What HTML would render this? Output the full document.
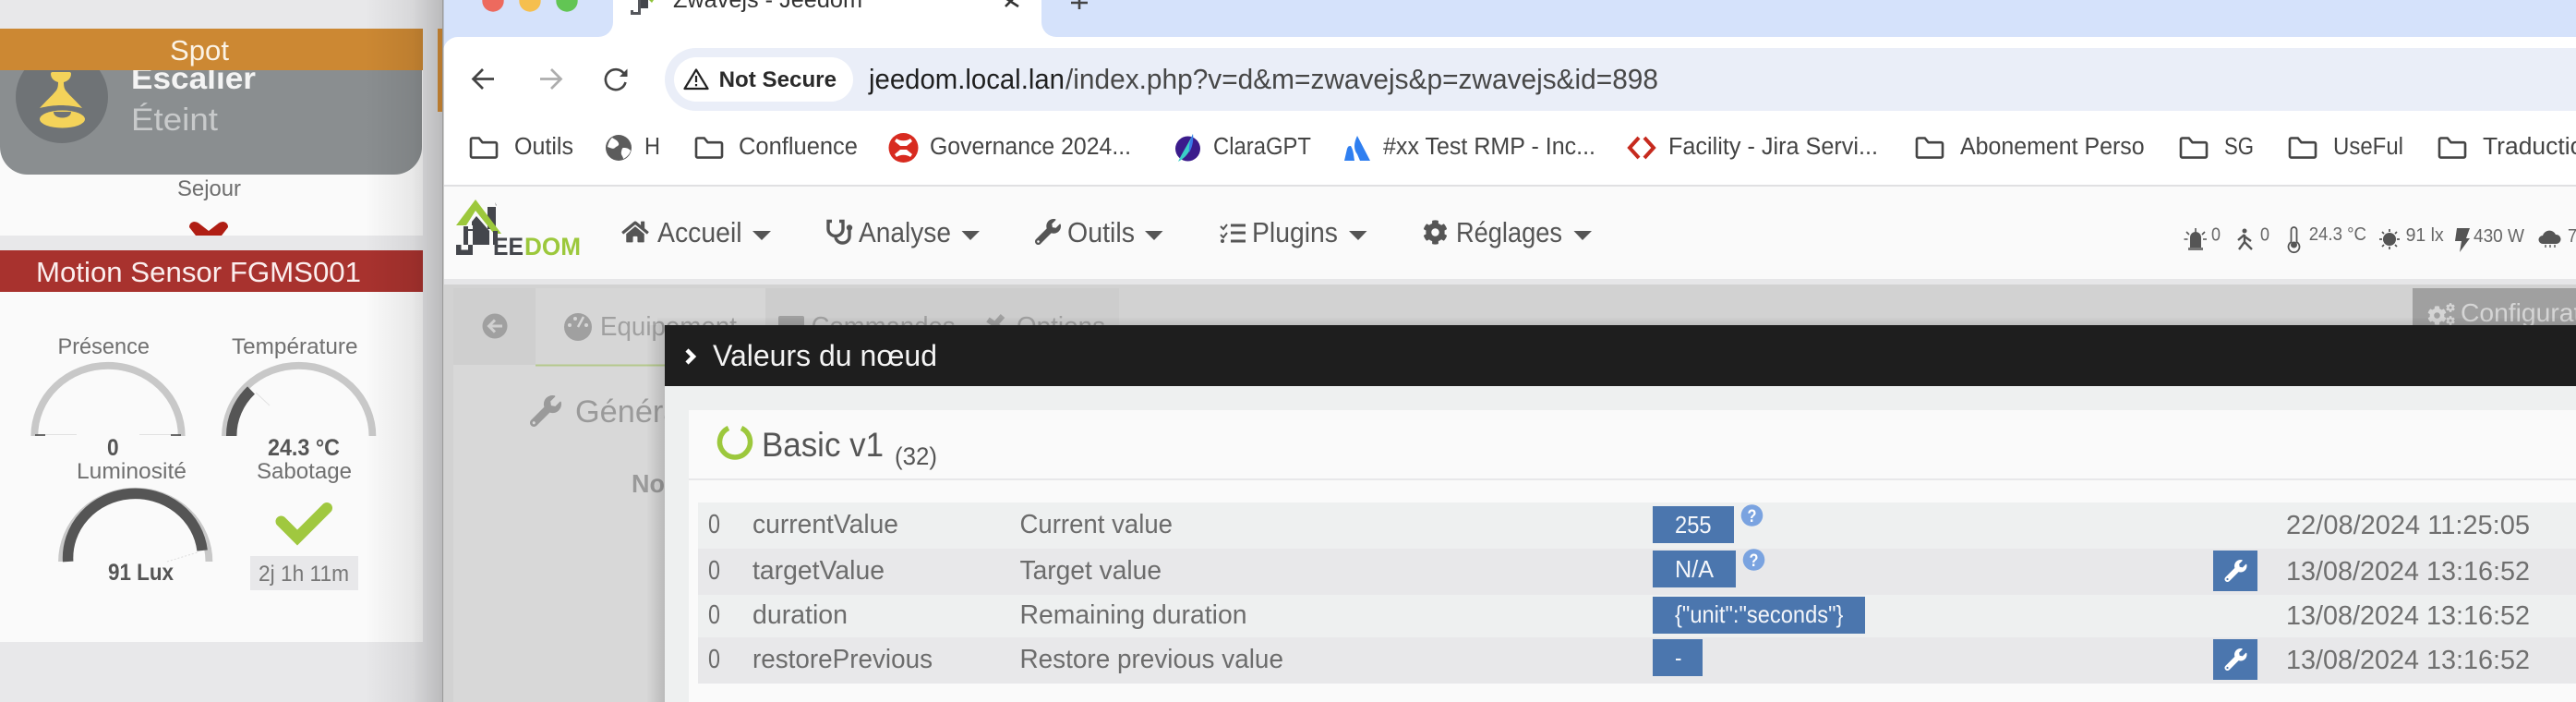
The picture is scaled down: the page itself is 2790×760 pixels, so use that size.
<!DOCTYPE html>
<html lang="fr">
<head>
<meta charset="utf-8">
<title>Zwavejs - Jeedom</title>
<style>
html,body{margin:0;padding:0;width:2790px;height:760px;overflow:hidden;background:#e8e8ea}
svg{display:block}
text{font-family:"Liberation Sans",sans-serif}
.bm{font-size:25.500px;fill:#444}
.nav{font-size:30.500px;fill:#555}
.td{font-size:28.500px;fill:#6c6c6c}
.val{font-size:26px;fill:#f4f6fa}
.lab{font-size:24.500px;fill:#707070}
.big{font-size:25px;font-weight:bold;fill:#555}
.inf{font-size:20px;fill:#666}
</style>
</head>
<body>
<svg xmlns="http://www.w3.org/2000/svg" width="2790" height="760" viewBox="0 0 2790 760">
<defs>
<linearGradient id="sh" x1="0" x2="1" y1="0" y2="0">
<stop offset="0" stop-color="#000" stop-opacity="0"/>
<stop offset=".6" stop-color="#000" stop-opacity=".07"/>
<stop offset="1" stop-color="#000" stop-opacity=".2"/>
</linearGradient>
<linearGradient id="topsh" x1="0" x2="0" y1="0" y2="1">
<stop offset="0" stop-color="#000" stop-opacity="0"/>
<stop offset="1" stop-color="#000" stop-opacity=".09"/>
</linearGradient>
<linearGradient id="modalsh" x1="0" x2="1" y1="0" y2="0">
<stop offset="0" stop-color="#000" stop-opacity="0"/>
<stop offset="1" stop-color="#000" stop-opacity=".14"/>
</linearGradient>
<symbol id="wrench" viewBox="0 0 512 512"><path d="M507.73 109.1c-2.24-9.03-13.54-12.09-20.12-5.51l-74.36 74.36-67.88-11.31-11.31-67.88 74.36-74.36c6.62-6.62 3.43-17.9-5.66-20.16-47.38-11.74-99.55.91-136.58 37.93-39.64 39.64-50.55 97.1-34.05 147.2L18.74 402.76c-24.99 24.99-24.99 65.51 0 90.5 24.99 24.99 65.51 24.99 90.5 0l213.21-213.21c50.12 16.71 107.47 5.68 147.37-34.22 37.07-37.07 49.7-89.32 37.91-136.73zM64 472c-13.25 0-24-10.75-24-24 0-13.26 10.75-24 24-24s24 10.74 24 24c0 13.25-10.75 24-24 24z"/></symbol>
<symbol id="home" viewBox="0 0 576 512"><path d="M280.37 148.26L96 300.11V464a16 16 0 0 0 16 16l112.06-.29a16 16 0 0 0 15.92-16V368a16 16 0 0 1 16-16h64a16 16 0 0 1 16 16v95.64a16 16 0 0 0 16 16.05L464 480a16 16 0 0 0 16-16V300L295.67 148.26a12.19 12.19 0 0 0-15.3 0zM571.6 251.47L488 182.56V44.05a12 12 0 0 0-12-12h-56a12 12 0 0 0-12 12v72.61L318.47 43a48 48 0 0 0-61 0L4.34 251.47a12 12 0 0 0-1.6 16.9l25.5 31A12 12 0 0 0 45.15 301l235.22-193.74a12.19 12.19 0 0 1 15.3 0L530.9 301a12 12 0 0 0 16.9-1.6l25.5-31a12 12 0 0 0-1.7-16.93z"/></symbol>
<symbol id="cog" viewBox="0 0 512 512"><path d="M487.4 315.7l-42.6-24.6c4.3-23.2 4.3-47 0-70.2l42.6-24.6c4.9-2.8 7.1-8.6 5.5-14-11.1-35.6-30-67.8-54.7-94.6-3.8-4.1-10-5.1-14.8-2.3L380.8 110c-17.9-15.4-38.5-27.3-60.8-35.1V25.8c0-5.6-3.9-10.5-9.4-11.7-36.7-8.2-74.3-7.8-109.2 0-5.5 1.2-9.4 6.1-9.4 11.7V75c-22.2 7.9-42.8 19.8-60.8 35.1L88.7 85.5c-4.9-2.8-11-1.9-14.8 2.3-24.7 26.7-43.6 58.9-54.7 94.6-1.7 5.4.6 11.2 5.5 14L67.3 221c-4.3 23.2-4.3 47 0 70.2l-42.6 24.6c-4.9 2.8-7.1 8.6-5.5 14 11.1 35.6 30 67.8 54.7 94.6 3.8 4.1 10 5.1 14.8 2.3l42.6-24.6c17.9 15.4 38.5 27.3 60.8 35.1v49.2c0 5.6 3.9 10.5 9.4 11.7 36.7 8.2 74.3 7.8 109.2 0 5.5-1.2 9.4-6.1 9.4-11.7v-49.2c22.2-7.9 42.8-19.8 60.8-35.1l42.6 24.6c4.9 2.8 11 1.9 14.8-2.3 24.7-26.7 43.6-58.9 54.7-94.6 1.5-5.5-.7-11.3-5.6-14.1zM256 336c-44.1 0-80-35.9-80-80s35.9-80 80-80 80 35.9 80 80-35.9 80-80 80z"/></symbol>
<symbol id="folder" viewBox="0 0 32 24"><path d="M2 5.500V21a1.600 1.600 0 0 0 1.600 1.600h24.800A1.600 1.600 0 0 0 30 21V7.800a1.600 1.600 0 0 0-1.600-1.600H14.500L10.800 1.500H3.600A1.600 1.600 0 0 0 2 3.100z" fill="none" stroke="#444" stroke-width="2.600" stroke-linejoin="round"/></symbol>
<clipPath id="pageclip"><rect x="481" y="308" width="2309" height="44"/></clipPath>
</defs>

<!-- LEFT PAGE -->
<rect width="480" height="760" fill="#e8e8ea"/>
<rect x="0" y="76" width="458" height="179" fill="#fafafa"/>
<path d="M0 76H457V159a30 30 0 0 1-30 30H30a30 30 0 0 1-30-30z" fill="#8a8e90"/>
<circle cx="67" cy="105" r="50" fill="#6f7376"/>
<g fill="#f4d35a">
<path d="M55 80a2 2 0 0 1 2-2h18a2 2 0 0 1 2 2c0 5-4 8-8 9 0 5 1 8 3 10 4 5 11 11 17 18-8-2-16-3-23-3s-15 1-23 3c6-7 13-13 17-18 2-2 3-5 3-10-4-1-8-4-8-9z"/>
<ellipse cx="67.500" cy="129" rx="24.500" ry="9.500"/>
</g>
<path d="M58 121h19c0 4-4 6.500-9.500 6.500S58 125 58 121z" fill="#6f7376"/>
<text x="142" y="96" font-size="33" font-weight="bold" fill="#f4f4f4" textLength="135" lengthAdjust="spacingAndGlyphs">Escalier</text>
<text x="142" y="141" font-size="34" fill="#c8cacb" textLength="94" lengthAdjust="spacingAndGlyphs">Éteint</text>
<rect x="0" y="31" width="458" height="45" fill="#cc8833"/>
<text x="184" y="65" font-size="31" fill="#fbf3e6" textLength="64" lengthAdjust="spacingAndGlyphs">Spot</text>
<text x="192" y="212" font-size="24.500" fill="#6e6e6e" textLength="69" lengthAdjust="spacingAndGlyphs">Sejour</text>
<path d="M205 246Q205 241 210 240Q214 240 217 243L226 250L235 243Q238 240 242 240Q247 241 247 246L240 255H212z" fill="#b01e14"/>
<rect x="0" y="255" width="458" height="16" fill="#e8e8ea"/>
<rect x="0" y="271" width="458" height="45" fill="#a8322e"/>
<text x="39" y="305" font-size="31" fill="#fbeeee" textLength="352" lengthAdjust="spacingAndGlyphs">Motion Sensor FGMS001</text>
<rect x="0" y="316" width="458" height="379" fill="#fafafa"/>

<text x="62.500" y="383" class="lab" textLength="99.500" lengthAdjust="spacingAndGlyphs">Présence</text>
<text x="251" y="383" class="lab" textLength="136.500" lengthAdjust="spacingAndGlyphs">Température</text>
<!-- gauge 1 -->
<path d="M37.300 472A79.700 76.200 0 0 1 196.700 472" fill="none" stroke="#c8c8c8" stroke-width="7.800"/>
<path d="M38 471h11M185 471h11" stroke="#555" stroke-width="1.800"/>
<path d="M49 470.500h34M151 470.500h34" stroke="#e2e2e2" stroke-width="1"/>
<text x="116" y="493" class="big" textLength="12.600" lengthAdjust="spacingAndGlyphs">0</text>
<!-- gauge 2 -->
<path d="M244 472A79.700 76.200 0 0 1 403.400 472" fill="none" stroke="#c8c8c8" stroke-width="7.800"/>
<path d="M250.700 472A73 69.500 0 0 1 272 422.500" fill="none" stroke="#555" stroke-width="11.500"/>
<path d="M277 425L292 439" stroke="#e2e2e2" stroke-width="1"/>
<text x="290" y="493" class="big" textLength="78" lengthAdjust="spacingAndGlyphs">24.3 °C</text>
<text x="83" y="518" class="lab" textLength="119" lengthAdjust="spacingAndGlyphs">Luminosité</text>
<text x="278" y="518" class="lab" textLength="103" lengthAdjust="spacingAndGlyphs">Sabotage</text>
<!-- gauge 3 -->
<path d="M67 608A79.700 76.200 0 0 1 226.400 608" fill="none" stroke="#c8c8c8" stroke-width="7.800"/>
<path d="M73.700 608A73 69.500 0 0 1 219.100 596" fill="none" stroke="#555" stroke-width="11.500"/>
<path d="M181 608L214 598" stroke="#ddd" stroke-width="1" stroke-dasharray="2 2"/>
<text x="117" y="628" class="big" textLength="71" lengthAdjust="spacingAndGlyphs">91 Lux</text>
<path d="M304.500 564.500L322 582L354 550" fill="none" stroke="#a0c83f" stroke-width="12" stroke-linecap="round" stroke-linejoin="miter"/>
<rect x="271" y="602" width="117" height="37" fill="#e8e8ea"/>
<text x="280" y="629" class="lab" style="fill:#777" textLength="98" lengthAdjust="spacingAndGlyphs">2j 1h 11m</text>

<rect x="395" y="0" width="85" height="760" fill="url(#sh)"/>
<rect x="474" y="31" width="6" height="90" fill="#b87a2f"/>

<!-- BROWSER WINDOW -->
<rect x="480" y="0" width="2310" height="760" fill="#fff"/>
<rect x="480" y="0" width="2310" height="40" fill="#d5e2fb"/>
<path d="M480 56a16 16 0 0 1 16-16H480z" fill="#d5e2fb"/>
<path d="M664 0V24a16 16 0 0 1-16 16h496a16 16 0 0 1-16-16V0z" fill="#fff"/>
<rect x="479" y="0" width="1.500" height="760" fill="#9b9b9b"/>
<circle cx="534" cy="1" r="11.700" fill="#ed6a5e"/>
<circle cx="574" cy="1" r="11.700" fill="#f5bf4f"/>
<circle cx="614" cy="1" r="11.700" fill="#62c554"/>
<!-- favicon -->
<path d="M693 0h9v9h-9z" fill="#44464c"/>
<path d="M683 11h3v2h5V0h3v16h-11z" fill="#55575c"/>
<path d="M703 0h5l-2 3z" fill="#8fc33a"/>
<text x="729" y="8" font-size="25" fill="#333" textLength="205" lengthAdjust="spacingAndGlyphs">Zwavejs - Jeedom</text>
<path d="M1089-2L1103 7M1103-7L1089 7" stroke="#333" stroke-width="2.600" fill="none"/>
<path d="M1169-6V10M1160 3H1178" stroke="#444" stroke-width="2.600" fill="none"/>

<!-- toolbar -->
<path d="M535 85.500H514M523 75L512.500 85.500L523 96" fill="none" stroke="#444" stroke-width="2.700"/>
<path d="M585 85.500H606M597 75L607.500 85.500L597 96" fill="none" stroke="#adadad" stroke-width="2.700"/>
<path d="M677.500 89a11 11 0 1 1-1.500-9" fill="none" stroke="#444" stroke-width="2.600"/>
<path d="M679.500 74.500V83H671z" fill="#444"/>
<path d="M754 52H2790V120H754a34 34 0 0 1 0-68z" fill="#eaeef8"/>
<rect x="730" y="62" width="194" height="48" rx="24" fill="#fff"/>
<path d="M754 75.500L766.500 96H741.500z" fill="none" stroke="#222" stroke-width="2.200" stroke-linejoin="round"/>
<rect x="752.900" y="82" width="2.200" height="7" fill="#222"/>
<rect x="752.900" y="91" width="2.200" height="2.300" fill="#222"/>
<text x="778.600" y="94" font-size="24.500" font-weight="bold" fill="#2a2a2a" textLength="127.400" lengthAdjust="spacingAndGlyphs">Not Secure</text>
<text x="941" y="96" font-size="31" fill="#1f1f1f" textLength="212" lengthAdjust="spacingAndGlyphs">jeedom.local.lan</text>
<text x="1154" y="96" font-size="31" fill="#474747" textLength="642" lengthAdjust="spacingAndGlyphs">/index.php?v=d&amp;m=zwavejs&amp;p=zwavejs&amp;id=898</text>

<!-- bookmarks -->
<use href="#folder" x="508" y="148" width="32" height="24"/>
<text x="557" y="167" class="bm" textLength="64" lengthAdjust="spacingAndGlyphs">Outils</text>
<circle cx="670" cy="160" r="14" fill="#5c5c5c"/>
<path d="M663 149c3 2 6 3 7 6s-2 3-4 5-5 0-8-1c1-4 2-7 5-10zM676 160c3 0 5 1 7 3-1 4-4 7-8 9 0-3-3-4-2-8s1-4 3-4z" fill="#fff"/>
<text x="698" y="167" class="bm" textLength="17" lengthAdjust="spacingAndGlyphs">H</text>
<use href="#folder" x="752" y="148" width="32" height="24"/>
<text x="800" y="167" class="bm" textLength="129" lengthAdjust="spacingAndGlyphs">Confluence</text>
<circle cx="978.500" cy="160" r="16" fill="#d82b20"/>
<path d="M971 150c4 3 11 3 15 0l2 3-6 5h-7l-6-5zM971 170c4-3 11-3 15 0l2-3-6-5h-7l-6 5z" fill="#fff"/>
<text x="1007" y="167" class="bm" textLength="218" lengthAdjust="spacingAndGlyphs">Governance 2024...</text>
<circle cx="1286.500" cy="161" r="13.500" fill="#3b1c8c"/>
<path d="M1292 145c1 12-4 24-16 30 5-11 11-19 16-30z" fill="#3ad0c8"/>
<path d="M1292 145c1 8-1 15-4 20-1-6 1-14 4-20z" fill="#3a78e8"/>
<text x="1314" y="167" class="bm" textLength="106" lengthAdjust="spacingAndGlyphs">ClaraGPT</text>
<path d="M1470 147c-4 8-4 15 0 20l3 7h11zM1463 158c-3 0-3 1-4 3l-3 13h11c-1-6-1-11-4-16z" fill="#2f7ff0"/>
<text x="1498" y="167" class="bm" textLength="230" lengthAdjust="spacingAndGlyphs">#xx Test RMP - Inc...</text>
<path d="M1775 149L1765 160L1775 171M1781 149L1791 160L1781 171" fill="none" stroke="#c62a1e" stroke-width="4"/>
<text x="1807" y="167" class="bm" textLength="227" lengthAdjust="spacingAndGlyphs">Facility - Jira Servi...</text>
<use href="#folder" x="2074" y="148" width="32" height="24"/>
<text x="2123" y="167" class="bm" textLength="199.600" lengthAdjust="spacingAndGlyphs">Abonement Perso</text>
<use href="#folder" x="2360" y="148" width="32" height="24"/>
<text x="2409" y="167" class="bm" textLength="32" lengthAdjust="spacingAndGlyphs">SG</text>
<use href="#folder" x="2478" y="148" width="32" height="24"/>
<text x="2527" y="167" class="bm" textLength="76" lengthAdjust="spacingAndGlyphs">UseFul</text>
<use href="#folder" x="2640" y="148" width="32" height="24"/>
<text x="2689" y="167" class="bm" textLength="124" lengthAdjust="spacingAndGlyphs">Traduction</text>

<rect x="481" y="200" width="2309" height="2" fill="#e0e0e2"/>

<!-- jeedom navbar -->
<rect x="481" y="202" width="2309" height="100" fill="#fafafa"/>
<rect x="481" y="302" width="2309" height="6" fill="#e6e6e8"/>
<!-- logo -->
<rect x="528" y="224" width="9" height="24" fill="#44464c"/>
<path d="M536 219l2 3-1 1z" fill="#999"/>
<path d="M511 240L516 234L530 250V265H511z" fill="#44464c"/>
<path d="M502 245H514V265H502z" fill="#44464c"/>
<path d="M515 216L494 244H505L515 228L535 253H543z" fill="#9cc83c"/>
<rect x="507" y="250" width="5" height="22" fill="#fafafa"/>
<rect x="507" y="244" width="5" height="4" fill="#fafafa"/>
<path d="M494 265h5.500v5.500h7.500V265H512v11h-18z" fill="#44464c"/>
<rect x="534" y="250" width="5" height="15" fill="#44464c"/>
<text x="534" y="276" font-size="27" font-weight="bold" fill="#44464c" textLength="33" lengthAdjust="spacingAndGlyphs">EE</text>
<text x="568" y="276" font-size="27" font-weight="bold" fill="#9cc83c" textLength="61" lengthAdjust="spacingAndGlyphs">DOM</text>

<use href="#home" x="673" y="238" width="30" height="26" fill="#555"/>
<text x="712" y="262" class="nav" textLength="91.600" lengthAdjust="spacingAndGlyphs">Accueil</text>
<path d="M815 250H835L825 260z" fill="#555"/>
<path d="M901 239.500H897V248a8 7.500 0 0 0 16 0V239.500H909M905 255.500V256a7.500 7 0 0 0 15 0V249" fill="none" stroke="#555" stroke-width="3.400"/>
<circle cx="920" cy="246.500" r="3.200" fill="#555"/>
<text x="930" y="262" class="nav" textLength="100" lengthAdjust="spacingAndGlyphs">Analyse</text>
<path d="M1041.500 250H1061L1051 260z" fill="#555"/>
<use href="#wrench" x="1121" y="237" width="28" height="28" fill="#555"/>
<text x="1156" y="262" class="nav" textLength="73" lengthAdjust="spacingAndGlyphs">Outils</text>
<path d="M1240 250H1259.500L1250 260z" fill="#555"/>
<path d="M1322 245l3 3 4-5M1322 254l3 3 4-5" fill="none" stroke="#555" stroke-width="2"/>
<circle cx="1324" cy="261" r="2" fill="#555"/>
<path d="M1333 244H1349M1333 252H1349M1333 261H1349" stroke="#555" stroke-width="3"/>
<text x="1356" y="262" class="nav" textLength="93" lengthAdjust="spacingAndGlyphs">Plugins</text>
<path d="M1461 250H1480.500L1471 260z" fill="#555"/>
<use href="#cog" x="1541" y="238" width="27" height="27" fill="#555"/>
<text x="1577" y="262" class="nav" textLength="115" lengthAdjust="spacingAndGlyphs">Réglages</text>
<path d="M1704.500 250H1724L1714 260z" fill="#555"/>

<!-- info icons -->
<path d="M2372 268V257a6 6 0 0 1 12 0v11z" fill="#555"/>
<rect x="2370" y="268" width="16" height="3" fill="#777"/>
<path d="M2378 247v5M2368 251l3 3M2388 251l-3 3M2365.500 259h4M2386 259h4" stroke="#555" stroke-width="1.600"/>
<text x="2395" y="260.500" class="inf" textLength="10" lengthAdjust="spacingAndGlyphs">0</text>
<circle cx="2431" cy="250" r="2.500" fill="#555"/>
<path d="M2431 254L2424 260M2431 254L2431 262L2425 270M2431 262L2439 270M2431 256L2438 261" fill="none" stroke="#555" stroke-width="2.400"/>
<text x="2448" y="260.500" class="inf" textLength="10" lengthAdjust="spacingAndGlyphs">0</text>
<path d="M2481.500 249a3 3 0 0 1 6 0v13a6 6 0 1 1-6 0z" fill="none" stroke="#555" stroke-width="1.800"/>
<circle cx="2484.500" cy="265" r="3.500" fill="#555"/>
<text x="2500.700" y="260" class="inf" textLength="62.300" lengthAdjust="spacingAndGlyphs">24.3 °C</text>
<circle cx="2588" cy="259" r="7" fill="#555"/>
<path d="M2588 248v3M2588 267v3M2577 259h3M2596 259h3M2580 251l2 2M2594 265l2 2M2596 251l-2 2M2582 265l-2 2" stroke="#555" stroke-width="1.700"/>
<text x="2605.600" y="261" class="inf" textLength="41.100" lengthAdjust="spacingAndGlyphs">91 lx</text>
<path d="M2661 247H2675L2671 258H2675L2664 273L2666 261H2659z" fill="#555"/>
<text x="2679" y="262" class="inf" textLength="55" lengthAdjust="spacingAndGlyphs">430 W</text>
<path d="M2754 264a4.500 4.500 0 0 1 0-9 7.500 7.500 0 0 1 14-1 5 5 0 0 1 1 10z" fill="#555"/>
<path d="M2757 265v3M2762 265v3M2767 265v3" stroke="#555" stroke-width="1.400"/>
<text x="2781" y="262" class="inf" textLength="10" lengthAdjust="spacingAndGlyphs">7</text>

<!-- dimmed jeedom page -->
<rect x="481" y="308" width="2309" height="452" fill="#d2d2d2"/>
<rect x="491" y="395" width="240" height="365" fill="#d8d8d8"/>
<rect x="491" y="312" width="89" height="83" fill="#cfcfcf"/>
<circle cx="536" cy="353" r="13.500" fill="#a0a0a0"/>
<path d="M544 353H530M536 346.500L529.500 353L536 359.500" fill="none" stroke="#d0d0d0" stroke-width="3"/>
<rect x="580" y="312" width="249" height="83" fill="#d6d6d6"/>
<rect x="829" y="312" width="383" height="40" fill="#cdcdcd"/>
<rect x="580" y="394.500" width="140" height="2" fill="#b5c98c"/>
<circle cx="626" cy="354" r="15" fill="#a0a0a0"/>
<path d="M626 354L632 343" stroke="#d6d6d6" stroke-width="2.500"/>
<circle cx="617" cy="352" r="2" fill="#d6d6d6"/><circle cx="623" cy="345" r="2" fill="#d6d6d6"/><circle cx="635" cy="352" r="2" fill="#d6d6d6"/>
<text x="650" y="363" font-size="29" fill="#a0a0a0" textLength="148" lengthAdjust="spacingAndGlyphs">Equipement</text>
<g clip-path="url(#pageclip)">
<rect x="843" y="342" width="28" height="20" rx="2" fill="#a0a0a0"/>
<text x="878.600" y="363" font-size="29" fill="#a0a0a0" textLength="156" lengthAdjust="spacingAndGlyphs">Commandes</text>
<path d="M1070 346L1090 360M1086 342L1070 360" stroke="#a0a0a0" stroke-width="6"/>
<text x="1101" y="363" font-size="29" fill="#a0a0a0" textLength="96" lengthAdjust="spacingAndGlyphs">Options</text>
<rect x="2613" y="312" width="177" height="40" fill="#a0a0a0"/>
<use href="#cog" x="2629" y="331" width="21" height="21" fill="#d5d5d5"/>
<use href="#cog" x="2649" y="328" width="10" height="10" fill="#d5d5d5"/>
<use href="#cog" x="2649" y="342" width="10" height="10" fill="#d5d5d5"/>
<text x="2665" y="348" font-size="28" fill="#d5d5d5" textLength="168" lengthAdjust="spacingAndGlyphs">Configuration</text>
</g>
<rect x="712" y="343" width="2078" height="9" fill="url(#topsh)"/>
<use href="#wrench" x="574" y="428" width="34" height="34" fill="#9a9a9a"/>
<text x="623" y="457" font-size="34" fill="#9a9a9a" textLength="122" lengthAdjust="spacingAndGlyphs">Général</text>
<text x="684" y="533" font-size="28" fill="#9a9a9a" font-weight="bold" textLength="60" lengthAdjust="spacingAndGlyphs">Nom</text>
<rect x="700" y="352" width="20" height="408" fill="url(#modalsh)"/>

<!-- modal -->
<rect x="720" y="352" width="2070" height="408" fill="#eef0f0"/>
<rect x="720" y="352" width="2070" height="66" fill="#1e1e1e"/>
<path d="M744 379L751 386L744 393" fill="none" stroke="#fff" stroke-width="4.500"/>
<text x="772" y="396" font-size="32" fill="#f4f4f4" textLength="243" lengthAdjust="spacingAndGlyphs">Valeurs du nœud</text>
<rect x="746" y="444" width="2044" height="316" fill="#fafafa"/>
<rect x="746" y="518" width="2044" height="2" fill="#e8e8ea"/>
<path d="M789 463.500A16.500 16.500 0 1 0 803 463.500" fill="none" stroke="#9cc83c" stroke-width="5.500"/>
<text x="825" y="494" font-size="37" fill="#555" textLength="132" lengthAdjust="spacingAndGlyphs">Basic v1</text>
<text x="969" y="503" font-size="27" fill="#555" textLength="46" lengthAdjust="spacingAndGlyphs">(32)</text>

<rect x="756" y="544" width="2034" height="50" fill="#eef0f0"/>
<rect x="756" y="594" width="2034" height="50" fill="#e8e8ea"/>
<rect x="756" y="644" width="2034" height="46" fill="#eef0f0"/>
<rect x="756" y="690" width="2034" height="50" fill="#e8e8ea"/>

<text x="767" y="577" class="td" textLength="13" lengthAdjust="spacingAndGlyphs">0</text>
<text x="815" y="577" class="td" textLength="158" lengthAdjust="spacingAndGlyphs">currentValue</text>
<text x="1104.500" y="577" class="td" textLength="165.500" lengthAdjust="spacingAndGlyphs">Current value</text>
<text x="767" y="627" class="td" textLength="13" lengthAdjust="spacingAndGlyphs">0</text>
<text x="815" y="627" class="td" textLength="143" lengthAdjust="spacingAndGlyphs">targetValue</text>
<text x="1104.500" y="627" class="td" textLength="153.500" lengthAdjust="spacingAndGlyphs">Target value</text>
<text x="767" y="675" class="td" textLength="13" lengthAdjust="spacingAndGlyphs">0</text>
<text x="815" y="675" class="td" textLength="103" lengthAdjust="spacingAndGlyphs">duration</text>
<text x="1104.500" y="675" class="td" textLength="246" lengthAdjust="spacingAndGlyphs">Remaining duration</text>
<text x="767" y="723" class="td" textLength="13" lengthAdjust="spacingAndGlyphs">0</text>
<text x="815" y="723" class="td" textLength="195" lengthAdjust="spacingAndGlyphs">restorePrevious</text>
<text x="1104.500" y="723" class="td" textLength="285.500" lengthAdjust="spacingAndGlyphs">Restore previous value</text>

<rect x="1790" y="548" width="88" height="40" fill="#4b76ae"/>
<text x="1814" y="577" class="val" textLength="39.600" lengthAdjust="spacingAndGlyphs">255</text>
<rect x="1790" y="596" width="90" height="40" fill="#4b76ae"/>
<text x="1814" y="625" class="val" textLength="42" lengthAdjust="spacingAndGlyphs">N/A</text>
<rect x="1790" y="646" width="230" height="40" fill="#4b76ae"/>
<text x="1814" y="674" class="val" textLength="182.400" lengthAdjust="spacingAndGlyphs">{"unit":"seconds"}</text>
<rect x="1790" y="692" width="54" height="40" fill="#4b76ae"/>
<text x="1814" y="721" class="val" textLength="7.500" lengthAdjust="spacingAndGlyphs">-</text>

<circle cx="1897.500" cy="558" r="11.800" fill="#7aa3e0"/>
<text x="1892.500" y="565" font-size="19" font-weight="bold" fill="#fff" textLength="10" lengthAdjust="spacingAndGlyphs">?</text>
<circle cx="1899.500" cy="606" r="11.800" fill="#7aa3e0"/>
<text x="1894.500" y="613" font-size="19" font-weight="bold" fill="#fff" textLength="10" lengthAdjust="spacingAndGlyphs">?</text>

<rect x="2397" y="596" width="48" height="44" fill="#4b76ae"/>
<use href="#wrench" x="2409" y="606" width="25" height="24" fill="#fff"/>
<rect x="2397" y="692" width="48" height="44" fill="#4b76ae"/>
<use href="#wrench" x="2409" y="702" width="25" height="24" fill="#fff"/>

<text x="2476" y="578" class="td" style="fill:#6f6f6f" textLength="264" lengthAdjust="spacingAndGlyphs">22/08/2024 11:25:05</text>
<text x="2476" y="628" class="td" style="fill:#6f6f6f" textLength="264" lengthAdjust="spacingAndGlyphs">13/08/2024 13:16:52</text>
<text x="2476" y="676" class="td" style="fill:#6f6f6f" textLength="264" lengthAdjust="spacingAndGlyphs">13/08/2024 13:16:52</text>
<text x="2476" y="724" class="td" style="fill:#6f6f6f" textLength="264" lengthAdjust="spacingAndGlyphs">13/08/2024 13:16:52</text>
</svg>
</body>
</html>
